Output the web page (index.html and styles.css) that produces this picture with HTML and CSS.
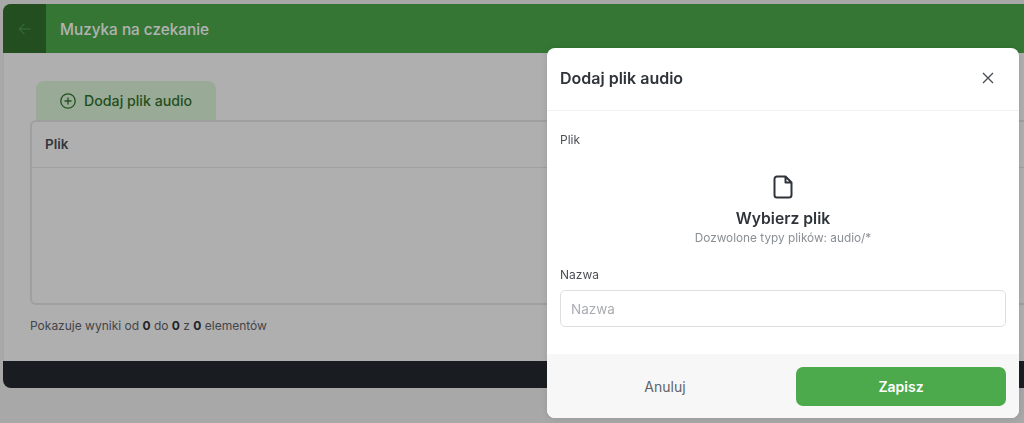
FILE: index.html
```html
<!DOCTYPE html>
<html lang="pl">
<head>
    <meta charset="UTF-8">
    <meta name="viewport" content="width=device-width, initial-scale=1.0">
    <title>Muzyka na czekanie</title>
    <link rel="stylesheet" href="styles.css">
</head>
<body>
    <div class="panel">
        <header class="topbar">
            <a class="back-btn">
                <svg width="14" height="14" viewBox="0 0 16 16" fill="none" stroke="currentColor" stroke-width="1.2"><path d="M14.500 8H1.500M7.500 2 1.500 8l6 6"/></svg>
            </a>
            <h1 class="topbar-title">Muzyka na czekanie</h1>
        </header>
        <main class="content">
            <div class="tab">
                <svg width="16" height="16" viewBox="0 0 16 16" fill="none" stroke="currentColor" stroke-width="1.3"><circle cx="8" cy="8" r="7.200"/><path d="M8 4.500v7M4.500 8h7"/></svg>
                <span>Dodaj plik audio</span>
            </div>
            <div class="table-card">
                <div class="table-head">Plik</div>
            </div>
            <p class="table-info">Pokazuje wyniki od <b>0</b> do <b>0</b> z <b>0</b> elementów</p>
        </main>
        <footer class="page-footer"></footer>
    </div>

    <!-- modal -->
    <div class="backdrop"></div>
    <div class="modal">
        <div class="modal-header">
            <h2>Dodaj plik audio</h2>
            <svg width="12" height="12" viewBox="0 0 12 12" fill="none" stroke="#4b5056" stroke-width="1.4"><path d="M1 1l10 10M11 1 1 11"/></svg>
        </div>
        <div class="modal-body">
            <label class="field-label">Plik</label>
            <div class="dropzone">
                <svg width="20" height="24" viewBox="0 0 20 24" fill="none" stroke="#2f343a" stroke-width="2" stroke-linejoin="round"><path d="M12.500 1.500H4a2.500 2.500 0 0 0-2.500 2.500v16A2.500 2.500 0 0 0 4 22.500h12a2.500 2.500 0 0 0 2.500-2.500V7.500zM12.500 1.500v6h6"/></svg>
                <div class="dropzone-title">Wybierz plik</div>
                <div class="dropzone-hint">Dozwolone typy plików: audio/*</div>
            </div>
            <label class="field-label">Nazwa</label>
            <input class="text-input" type="text" placeholder="Nazwa">
        </div>
        <div class="modal-footer">
            <button class="btn btn-cancel">Anuluj</button>
            <button class="btn btn-save">Zapisz</button>
        </div>
    </div>
</body>
</html>
```

FILE: styles.css
```css
* {
    box-sizing: border-box;
}
html, body {
    height: 100%;
}
body {
    margin: 0;
    overflow: hidden;
    font-family: 'Inter', sans-serif;
    background-color: #f1f1f1;
    color: #2f343a;
}
.panel {
    display: flex;
    flex-direction: column;
    height: 384px;
    margin: 4px 0 0 3px;
    background-color: #fbfbfb;
    border-radius: 8px 0 0 8px;
    overflow: hidden;
}
.topbar {
    display: flex;
    align-items: center;
    height: 49px;
    flex-shrink: 0;
    background-color: #4caa4c;
    color: #fff;
}
.back-btn {
    display: flex;
    align-items: center;
    justify-content: center;
    width: 43px;
    height: 100%;
    background-color: #33722e;
    color: #4f9f4f;
}
.topbar-title {
    margin: 2px 0 0 14px;
    font-size: 15.300px;
    font-weight: 500;
}
.content {
    flex: 1;
    padding: 28px 0 0 26px;
    border-left: 1px solid #ececec;
}
.tab {
    display: flex;
    align-items: center;
    gap: 8px;
    width: 180px;
    height: 39px;
    margin-left: 6px;
    padding-left: 24px;
    background-color: #dcf5d8;
    border-radius: 8px 8px 0 0;
    color: #33722e;
    font-size: 14.200px;
    font-weight: 500;
}
.table-card {
    height: 185px;
    background-color: #fbfbfb;
    border: 2px solid #e4e4e4;
    border-right: 0;
    border-radius: 6px 0 0 6px;
}
.table-head {
    height: 46px;
    padding: 14px 0 0 13px;
    border-bottom: 1px solid #e4e4e4;
    font-size: 13.500px;
    font-weight: 600;
    color: #4b5056;
}
.table-info {
    margin: 13px 0 0;
    font-size: 12px;
    color: #5f6469;
}
.table-info b {
    color: #2f343a;
}
.page-footer {
    height: 27px;
    flex-shrink: 0;
    background-color: #25292f;
}
.backdrop {
    position: fixed;
    inset: 0;
    background-color: rgba(0, 0, 0, 0.3);
}
.modal {
    position: fixed;
    top: 48px;
    left: 547px;
    width: 472px;
    height: 370px;
    display: flex;
    flex-direction: column;
    background-color: #fff;
    border-radius: 8px;
    box-shadow: 0 0 8px rgba(0, 0, 0, 0.12);
    overflow: hidden;
}
.modal-header {
    display: flex;
    align-items: center;
    justify-content: space-between;
    height: 63px;
    flex-shrink: 0;
    padding: 0 25px 2px 13px;
    border-bottom: 1px solid #f1f1f1;
}
.modal-header h2 {
    margin: 0;
    font-size: 16px;
    font-weight: 600;
}
.modal-body {
    flex: 1;
    padding: 21px 13px 0;
}
.field-label {
    display: block;
    font-size: 12px;
    line-height: 16px;
    color: #4b5056;
}
.dropzone {
    display: flex;
    flex-direction: column;
    align-items: center;
    height: 119px;
    padding-top: 27px;
}
.dropzone-title {
    margin-top: 10px;
    font-size: 15.700px;
    font-weight: 600;
    line-height: 20px;
}
.dropzone-hint {
    font-size: 11.800px;
    line-height: 16px;
    margin-top: 1px;
    color: #8a8f94;
}
.text-input {
    display: block;
    width: 446px;
    height: 37px;
    margin-top: 7px;
    padding: 0 10px;
    border: 1px solid #dedede;
    border-radius: 5px;
    font-family: inherit;
    font-size: 13.500px;
}
.text-input::placeholder {
    color: #a9adb1;
}
.modal-footer {
    display: flex;
    align-items: center;
    justify-content: space-between;
    height: 64px;
    flex-shrink: 0;
    padding: 0 13px;
    background-color: #f7f7f7;
}
.btn {
    height: 39px;
    width: 210px;
    border: 0;
    border-radius: 7px;
    font-family: inherit;
    font-size: 14px;
    font-weight: 400;
}
.btn-cancel {
    background-color: transparent;
    color: #5f6469;
}
.btn-save {
    background-color: #4caa4c;
    color: #fff;
    font-weight: 600;
}
```
